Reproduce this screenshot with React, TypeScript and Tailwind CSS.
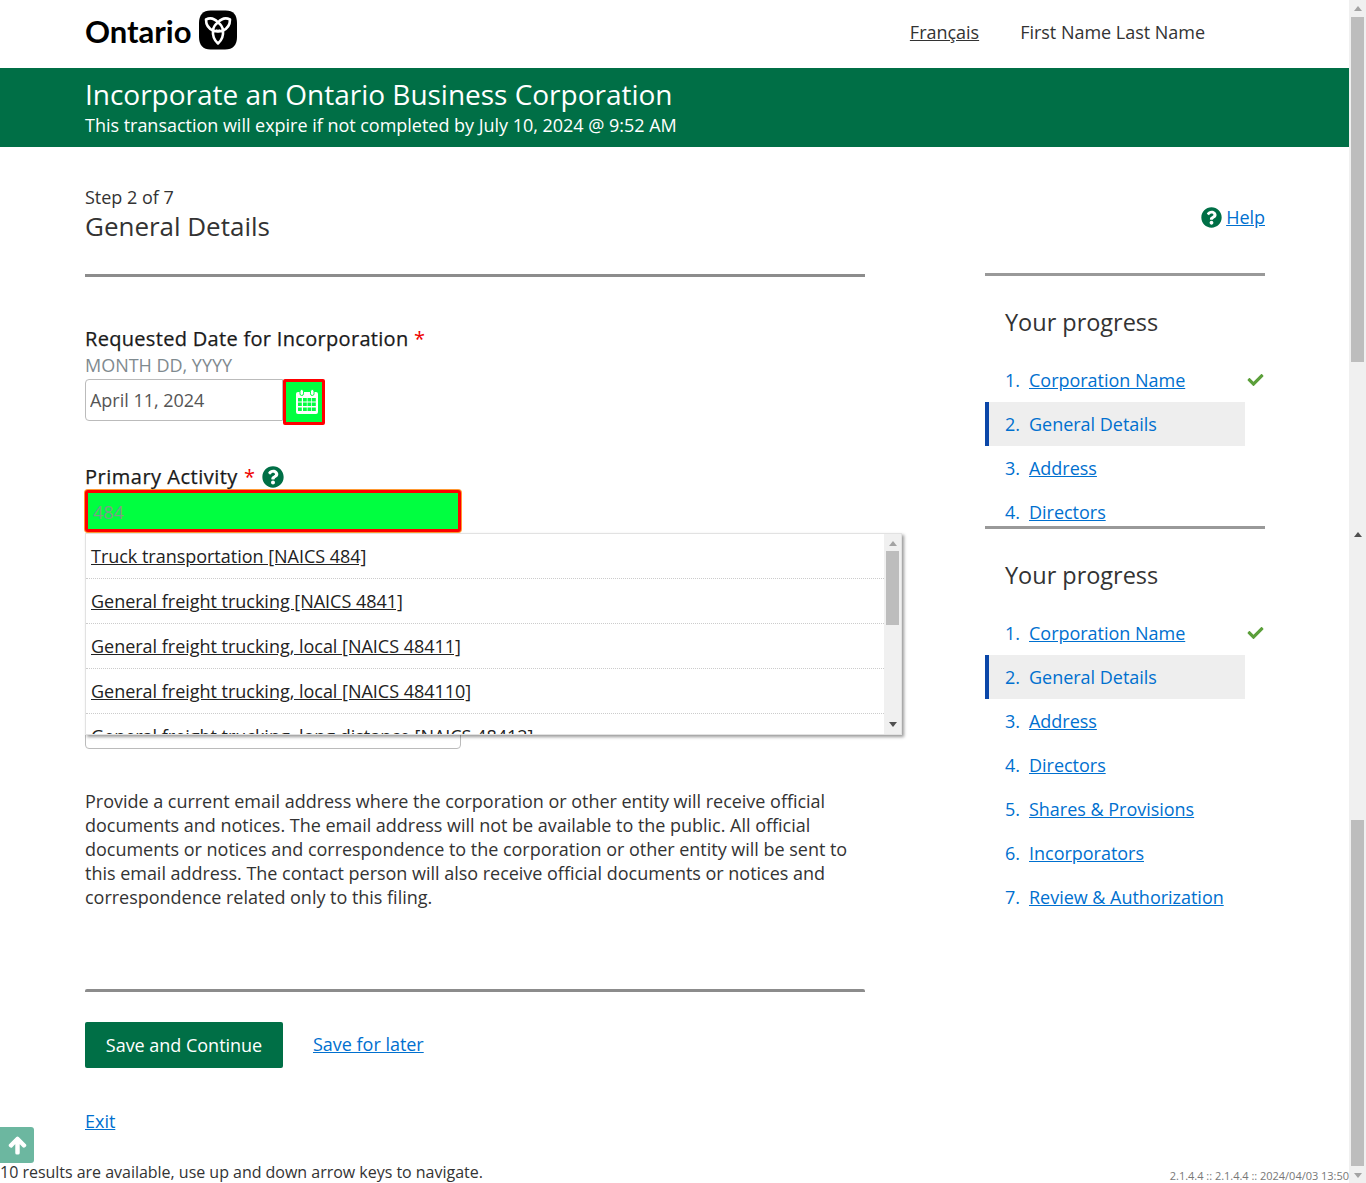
import { FaArrowUp, FaCheck, FaQuestionCircle } from 'react-icons/fa';

const font = { fontFamily: '"Open Sans", sans-serif' };

const steps = [
  { label: 'Corporation Name', done: true },
  { label: 'General Details', current: true },
  { label: 'Address' },
  { label: 'Directors' },
  { label: 'Shares & Provisions' },
  { label: 'Incorporators' },
  { label: 'Review & Authorization' },
];

const suggestions = [
  'Truck transportation [NAICS 484]',
  'General freight trucking [NAICS 4841]',
  'General freight trucking, local [NAICS 48411]',
  'General freight trucking, local [NAICS 484110]',
  'General freight trucking, long distance [NAICS 48412]',
];

function Trillium() {
  return (
    <svg className="h-[40px] w-[40px]" viewBox="0 0 39 40">
      <path d="M12 .5h15C35 .5 38.500 5 38.500 13v14c0 8-4 12.500-12 12.500H12C4.500 39.500.5 35 .5 27V13C.5 5 4.500.5 12 .5z" fill="#000" />
      <g fill="none" stroke="#fff" strokeWidth="2.600" strokeLinejoin="round">
        <path d="M19.500 12.500C16 8.500 11.500 7.500 7.500 9.500c0 5 2.500 9 7 11 2.500 1.100 5 1 7.500 0" />
        <path d="M19.500 12.500C23 8.500 27.500 7.500 31.500 9.500c0 5-2.500 9-7 11-2.500 1.100-5 1-7.500 0" />
        <path d="M24.500 20.500c.6 5.500-1.500 10-5 13-3.500-3-5.600-7.500-5-13 .3-3 2-6 5-8 3 2 4.700 5 5 8z" />
      </g>
    </svg>
  );
}

function CalendarIcon() {
  return (
    <svg className="h-[26px] w-[24px]" viewBox="0 0 24 26">
      <path d="M3 3h18a2 2 0 0 1 2 2v18a2 2 0 0 1-2 2H3a2 2 0 0 1-2-2V5a2 2 0 0 1 2-2z" fill="#fff" />
      <rect x="5" y="0.500" width="3.500" height="6" rx="1.700" fill="#fff" stroke="#00ff40" strokeWidth="1" />
      <rect x="15.500" y="0.500" width="3.500" height="6" rx="1.700" fill="#fff" stroke="#00ff40" strokeWidth="1" />
      <g fill="#00ff40">
        {[9, 13.500, 18.500].map((y) =>
          [3, 8, 12.500, 17].map((x) => <rect key={`${x}-${y}`} x={x} y={y} width="3.800" height="3.500" />),
        )}
      </g>
    </svg>
  );
}

function ProgressPanel({ clipped }: { clipped?: boolean }) {
  const items = clipped ? steps.slice(0, 4) : steps;
  return (
    <div className={`border-t-[3px] border-[#999] ${clipped ? 'h-[253px] overflow-hidden' : ''}`}>
      <h2 className="mt-[27px] ml-[20px] mb-[16px] text-[23.500px] leading-[39px] text-[#333]">Your progress</h2>
      <ol>
        {items.map((step, i) => (
          <li
            key={step.label}
            className={`relative flex h-[44px] items-center text-[18px] text-[#0070cf] ${
              step.current ? 'mr-[20px] border-l-4 border-[#0b47a8] bg-[#eeeeee] pl-[16px]' : 'pl-[20px]'
            }`}
          >
            <span className="w-[24px]">{i + 1}.</span>
            {step.current ? <span>{step.label}</span> : <a className="underline">{step.label}</a>}
            {step.done && <FaCheck className="absolute top-[14px] right-[1px] h-[16px] w-[17px] text-[#5b9f3a]" />}
          </li>
        ))}
      </ol>
    </div>
  );
}

export default function App() {
  return (
    <div className="relative flex h-[1183px] overflow-hidden bg-white tracking-[-0.02px] text-[#333]" style={font}>
      <div className="w-[1349px] shrink-0">
        {/* Header */}
        <header className="flex h-[68px] items-center pb-[4px] pl-[85px] pr-[144px]">
          <span className="mb-[2px] text-[31px] font-bold text-black" style={{ fontFamily: 'Lato, sans-serif' }}>
            Ontario
          </span>
          <span className="ml-[7px] -mt-[5px]">
            <Trillium />
          </span>
          <a className="ml-auto text-[18px] text-[#333] underline">Français</a>
          <span className="ml-[41px] text-[18px]">First Name Last Name</span>
        </header>
        <div className="h-[79px] bg-[#006f46] pl-[85px] pt-[7px] text-white">
          <h1 className="text-[28px] leading-[39px]">Incorporate an Ontario Business Corporation</h1>
          <p className="text-[18px] leading-[23px]">This transaction will expire if not completed by July 10, 2024 @ 9:52 AM</p>
        </div>

        <div className="flex gap-[120px] pl-[85px]">
          {/* Form column */}
          <main className="relative w-[780px] pt-[38px]">
            <p className="text-[18px] leading-[25px]">Step 2 of 7</p>
            <h2 className="-mt-[1px] text-[26px] leading-[35px]">General Details</h2>
            <div className="mt-[30px] h-[3px] bg-[#8c8c8c]" />

            <label className="mt-[48px] block text-[20px] font-medium leading-[27px] tracking-[0.31px] text-[#1a1a1a] [-webkit-text-stroke:0.25px_#1a1a1a]">
              Requested Date for Incorporation <span className="text-[#e00] [-webkit-text-stroke:0]">*</span>
            </label>
            <p className="mb-[1px] text-[18px] leading-[26px] text-[#7f8a8f]">MONTH DD, YYYY</p>
            <div className="flex items-start">
              <input
                readOnly
                value="April 11, 2024"
                className="h-[42px] w-[198px] rounded-l-[4px] border border-[#bbb] px-[4px] text-[18px] text-[#555]"
              />
              <button className="flex h-[46px] w-[42px] items-center justify-center rounded-[2px] border-[3px] border-[#f00] bg-[#00ff40] pl-[5px]">
                <CalendarIcon />
              </button>
            </div>

            <div className="mt-[38px] flex h-[27px] items-center text-[20px] font-medium tracking-[0.5px] text-[#1a1a1a] [-webkit-text-stroke:0.25px_#1a1a1a]">
              Primary Activity <span className="ml-[6px] text-[#e00] [-webkit-text-stroke:0]">*</span>
              <FaQuestionCircle className="ml-[7px] h-[22px] w-[22px] text-[#006f46]" />
            </div>
            <input
              readOnly
              value="484"
              className="block h-[42px] w-[376px] rounded-[3px] border-[3px] border-[#f00] bg-[#00ff40] px-[5px] pt-[1px] text-[18px] text-[#7c9c88] shadow-[0_0_0_1px_#ff9933]"
            />

            {/* input hidden under the autocomplete list */}
            <div className="mt-[173px] h-[44px] w-[376px] rounded-[4px] border border-[#bbb]" />

            <p className="mt-[40px] text-[18px] leading-[24px]">
              Provide a current email address where the corporation or other entity will receive official documents and
              notices. The email address will not be available to the public. All official documents or notices and
              correspondence to the corporation or other entity will be sent to this email address. The contact person
              will also receive official documents or notices and correspondence related only to this filing.
            </p>

            <div className="mt-[80px] h-[3px] rounded-t-[2px] bg-[#8c8c8c]" />

            <div className="mt-[30px] flex items-center">
              <button className="h-[46px] w-[198px] rounded-[2px] bg-[#006f46] text-[18px] font-medium text-white">
                Save and Continue
              </button>
              <a className="ml-[30px] -mt-[2px] text-[18px] text-[#0070cf] underline">Save for later</a>
            </div>
            <a className="mt-[41px] inline-block text-[18px] leading-[25px] text-[#0070cf] underline">Exit</a>

            {/* Autocomplete list */}
            <div className="absolute top-[386px] left-0 flex h-[202px] w-[817px] overflow-hidden border border-[#e2e2e2] bg-white shadow-[2px_2px_3px_rgba(0,0,0,0.4)]">
              <ul className="h-[200px] flex-1 overflow-hidden">
                {suggestions.map((s) => (
                  <li key={s} className="h-[45px] border-b border-dotted border-[#ccc] pl-[5px] pt-[10px] text-[18px] leading-[25px] text-[#222] underline">
                    {s}
                  </li>
                ))}
              </ul>
              <div className="flex w-[17px] flex-col items-center bg-[#f0f0f0]">
                <span className="mt-[7px] h-0 w-0 border-x-[4px] border-b-[5px] border-x-transparent border-b-[#a3a3a3]" />
                <span className="mt-[5px] h-[74px] w-[13px] bg-[#bdbdbd]" />
                <span className="mt-auto mb-[7px] h-0 w-0 border-x-[4px] border-t-[5px] border-x-transparent border-t-[#505050]" />
              </div>
            </div>
          </main>

          {/* Side column */}
          <aside className="w-[280px] pt-[58px]">
            <div className="flex h-[25px] items-center justify-end gap-[4px]">
              <FaQuestionCircle className="h-[21px] w-[21px] text-[#006f46]" />
              <a className="text-[18px] text-[#0070cf] underline">Help</a>
            </div>
            <div className="mt-[43px]">
              <ProgressPanel clipped />
              <ProgressPanel />
            </div>
          </aside>
        </div>
      </div>

      {/* Window scrollbar */}
      <div className="flex w-[17px] shrink-0 flex-col items-center bg-[#f0f0f0]">
        <span className="mt-[6px] h-0 w-0 border-x-[4px] border-b-[5px] border-x-transparent border-b-[#a3a3a3]" />
        <span className="mt-[6px] h-[345px] w-[13px] bg-[#bdbdbd]" />
        <span className="mt-[170px] h-0 w-0 border-x-[4px] border-b-[5px] border-x-transparent border-b-[#505050]" />
        <span className="mt-[283px] h-[346px] w-[13px] bg-[#bdbdbd]" />
        <span className="mt-[7px] h-0 w-0 border-x-[4px] border-t-[5px] border-x-transparent border-t-[#a3a3a3]" />
      </div>

      {/* Back to top */}
      <button className="absolute top-[1127px] left-0 flex h-[36px] w-[34px] items-center justify-center rounded-r-[3px] bg-[#6cb7a0]">
        <FaArrowUp className="h-[19px] w-[19px] text-white" strokeWidth={40} />
      </button>

      {/* Screen reader status + version, sit at page bottom */}
      <p className="absolute bottom-0 left-0 text-[16px] leading-[22px] text-[#333]">
        10 results are available, use up and down arrow keys to navigate.
      </p>
      <p className="absolute right-[17px] bottom-0 text-[11px] leading-[14px] text-[#777]">2.1.4.4 :: 2.1.4.4 :: 2024/04/03 13:50</p>
    </div>
  );
}
